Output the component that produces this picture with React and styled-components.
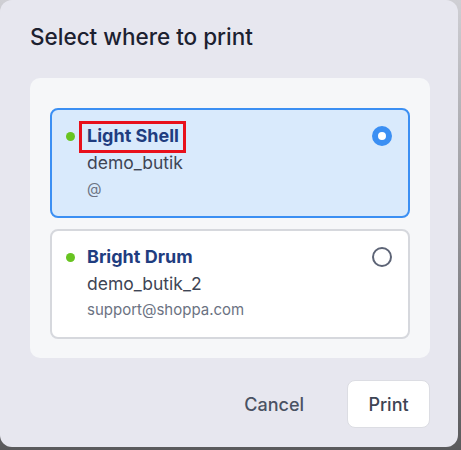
import React from "react";
import styled, { createGlobalStyle } from "styled-components";

const printers = [
  { name: "Light Shell", shop: "demo_butik", email: "@", selected: true, marked: true },
  { name: "Bright Drum", shop: "demo_butik_2", email: "support@shoppa.com", selected: false },
];

const App = () => {
  return (
    <>
      <Global />
      <Dialog>
        <Title>Select where to print</Title>
        <Panel>
          {printers.map((p) => (
            <Card key={p.name} selected={p.selected}>
              <Info>
                <NameRow>
                  <Dot />
                  <Name marked={p.marked}>{p.name}</Name>
                </NameRow>
                <Shop>{p.shop}</Shop>
                <Email>{p.email}</Email>
              </Info>
              <Radio selected={p.selected} />
            </Card>
          ))}
        </Panel>
        <Actions>
          <CancelButton>Cancel</CancelButton>
          <PrintButton>Print</PrintButton>
        </Actions>
      </Dialog>
    </>
  );
};

const Global = createGlobalStyle`
    html, body {
        margin: 0;
        padding: 0;
        width: 461px;
        height: 450px;
        overflow: hidden;
        background: linear-gradient(180deg, #cfcfd4 0%, #8a8a8e 60%, #5a5a5c 100%);
        font-family: Inter, "Noto Sans", sans-serif;
    }
`;

const Dialog = styled.div`
    width: 458px;
    height: 447px;
    box-sizing: border-box;
    background: #e7e7ef;
    border-radius: 12px;
    padding: 22px 28px 20px 30px;
    display: flex;
    flex-direction: column;
`;

const Title = styled.h2`
    margin: 0;
    font-size: 22.5px;
    line-height: 30px;
    font-weight: 500;
    color: #1c2130;
`;

const Panel = styled.div`
    margin-top: 26px;
    width: 400px;
    box-sizing: border-box;
    background: #f6f7f9;
    border-radius: 10px;
    padding: 30px 20px 19px;
    display: flex;
    flex-direction: column;
    gap: 11px;
`;

const Card = styled.div`
    box-sizing: border-box;
    height: 110px;
    border-radius: 8px;
    border: 2px solid ${(props) => (props.selected ? "#3b8ff3" : "#d6d8dd")};
    background: ${(props) => (props.selected ? "#d9eafc" : "#ffffff")};
    padding: 15px 16px 0 14px;
    display: flex;
    justify-content: space-between;
    align-items: flex-start;
`;

const Info = styled.div`
    display: flex;
    flex-direction: column;
    gap: 4px;
`;

const NameRow = styled.div`
    display: flex;
    align-items: center;
    gap: 12px;
`;

const Dot = styled.span`
    width: 9px;
    height: 9px;
    border-radius: 50%;
    background: #68c421;
`;

const Name = styled.span`
    font-size: 18px;
    line-height: 22px;
    font-weight: 700;
    color: #1f3d80;
    position: relative;
    &::after {
        content: "";
        display: ${(props) => (props.marked ? "block" : "none")};
        position: absolute;
        left: -8px;
        right: -7px;
        top: -4px;
        bottom: -6px;
        border: 3px solid #e8101b;
    }
`;

const Shop = styled.div`
    margin-left: 21px;
    font-size: 17.5px;
    line-height: 24px;
    color: #3e4554;
`;

const Email = styled.div`
    margin-left: 21px;
    font-size: 15px;
    line-height: 20px;
    color: #6b7282;
`;

const Radio = styled.span`
    margin-top: 1px;
    width: 20px;
    height: 20px;
    box-sizing: border-box;
    border-radius: 50%;
    border: ${(props) => (props.selected ? "6px solid #3b8ff3" : "2px solid #5d6476")};
    background: #ffffff;
`;

const Actions = styled.div`
    margin-top: 22px;
    width: 400px;
    display: flex;
    justify-content: flex-end;
    align-items: center;
    gap: 23px;
`;

const CancelButton = styled.button`
    border: none;
    background: transparent;
    font-family: inherit;
    font-size: 18px;
    font-weight: 500;
    color: #4a5263;
    padding: 0 20px;
    height: 48px;
`;

const PrintButton = styled(CancelButton)`
    background: #ffffff;
    border: 1px solid #dcdde3;
    border-radius: 8px;
    width: 83px;
    padding: 0;
    color: #3e4554;
`;

export default App;
